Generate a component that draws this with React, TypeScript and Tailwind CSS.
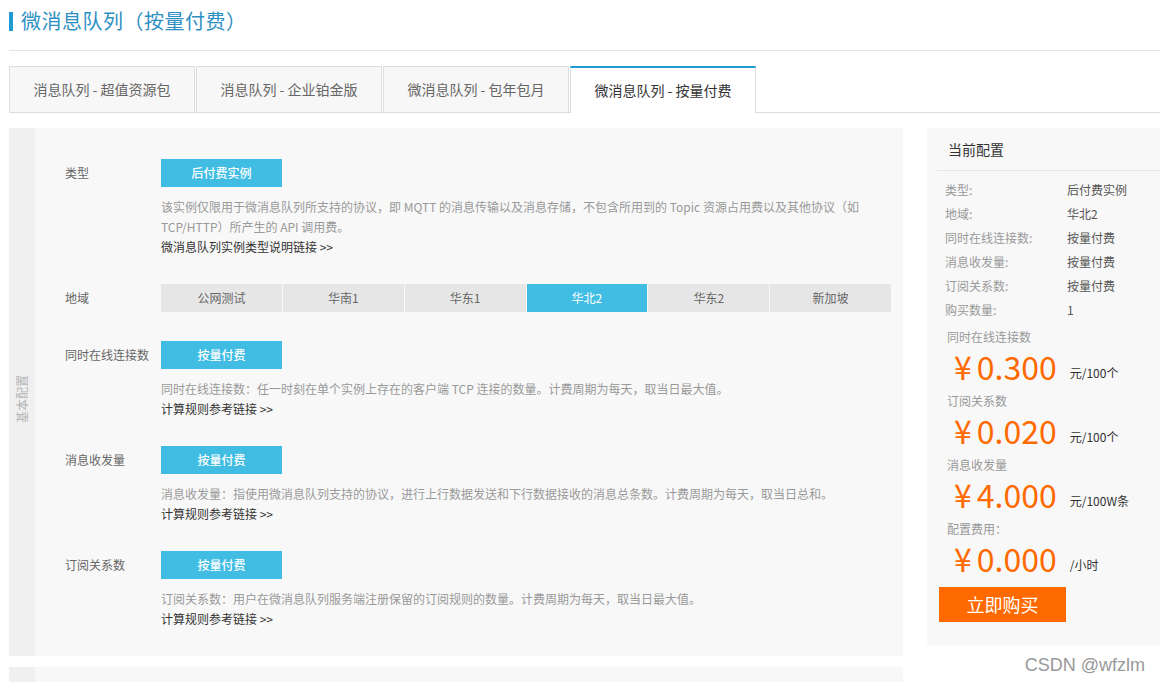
import React from "react";

const tabs = [
  "消息队列 - 超值资源包",
  "消息队列 - 企业铂金版",
  "微消息队列 - 包年包月",
  "微消息队列 - 按量付费",
];

const regions = ["公网测试", "华南1", "华东1", "华北2", "华东2", "新加坡"];

function Row({
  label,
  children,
  className = "",
}: {
  label: string;
  children: React.ReactNode;
  className?: string;
}) {
  return (
    <div className={"flex " + className}>
      <div className="w-[96px] h-[28px] flex items-center text-[#666] shrink-0">{label}</div>
      <div className="flex-1">{children}</div>
    </div>
  );
}

function BlueBtn({ children }: { children: React.ReactNode }) {
  return (
    <div className="w-[121px] h-[28px] bg-[#41bde3] text-white flex items-center justify-center text-[12px] font-medium">
      {children}
    </div>
  );
}

function Price({
  label,
  value,
  unit,
}: {
  label: string;
  value: string;
  unit: string;
}) {
  return (
    <div>
      <div className="h-[20px] flex items-center pl-[20px] text-[#999] text-[12px]">{label}</div>
      <div className="h-[44px] flex items-center pl-[27px] pb-[7px]">
        <span className="text-[#ff6a00] text-[32px] leading-none">¥</span>
        <span className="text-[#ff6a00] text-[32px] leading-none ml-[5px]">{value}</span>
        <span className="ml-[13px] mt-[14px] text-[12px] text-[#333]">{unit}</span>
      </div>
    </div>
  );
}

export default function App() {
  return (
    <div className="relative h-[682px] overflow-hidden bg-white font-['Noto_Sans_CJK_SC',sans-serif] text-[12px] text-[#666]">
      <div className="pl-[9px]">
        {/* Title */}
        <div className="h-[51px] pt-[11px] border-b border-[#e5e5e5]">
          <div className="flex items-center h-[20px] gap-[8px]">
            <div className="w-[4px] h-[19px] bg-[#1f9bd1]" />
            <div className="text-[20px] leading-[20px] text-[#2e8fc3] tracking-[0.5px]">微消息队列（按量付费）</div>
          </div>
        </div>

        {/* Tabs */}
        <div className="mt-[15px] flex border-b border-[#dddddd] h-[47px]">
          {tabs.map((t, i) => {
            const active = i === 3;
            return (
              <div
                key={t}
                className={
                  active
                    ? "w-[186px] h-[47px] ml-px bg-white border-t-2 border-t-[#1f9bd1] border-l border-r border-[#dddddd] flex items-center justify-center text-[14px] text-[#333]"
                    : i === 0
                    ? "w-[186px] h-[46px] bg-[#f7f7f7] border-t border-l border-r border-[#dddddd] flex items-center justify-center text-[14px] text-[#666]"
                    : "w-[186px] h-[46px] ml-px bg-[#f7f7f7] border-t border-l border-r border-[#dddddd] flex items-center justify-center text-[14px] text-[#666]"
                }
              >
                {t}
              </div>
            );
          })}
        </div>

        {/* Main */}
        <div className="mt-[15px] flex items-start">
          <div className="w-[894px] shrink-0">
            <div className="flex">
              <div className="w-[26px] bg-[#f0f0f0] flex items-center justify-center shrink-0 pt-[14px]">
                <span className="-rotate-90 whitespace-nowrap text-[12px] text-[#b5b5b5]">基本配置</span>
              </div>
              <div className="flex-1 bg-[#f8f8f8] pt-[31px] pb-[27px] pl-[30px] pr-[12px]">
                <Row label="类型">
                  <BlueBtn>后付费实例</BlueBtn>
                  <div className="mt-[10px] leading-[20px] text-[#999]">
                    该实例仅限用于微消息队列所支持的协议，即 MQTT 的消息传输以及消息存储，不包含所用到的 Topic 资源占用费以及其他协议（如
                    <br />
                    TCP/HTTP）所产生的 API 调用费。
                  </div>
                  <div className="leading-[20px] text-[#333]">微消息队列实例类型说明链接 &gt;&gt;</div>
                </Row>

                <Row label="地域" className="mt-[27px]">
                  <div className="grid grid-cols-6 gap-px">
                    {regions.map((r) => (
                      <div
                        key={r}
                        className={
                          r === "华北2"
                            ? "h-[28px] flex items-center justify-center bg-[#41bde3] text-white"
                            : "h-[28px] flex items-center justify-center bg-[#e6e6e6] text-[#666]"
                        }
                      >
                        {r}
                      </div>
                    ))}
                  </div>
                </Row>

                <Row label="同时在线连接数" className="mt-[29px]">
                  <BlueBtn>按量付费</BlueBtn>
                  <div className="mt-[10px] leading-[20px] text-[#999]">
                    同时在线连接数：任一时刻在单个实例上存在的客户端 TCP 连接的数量。计费周期为每天，取当日最大值。
                  </div>
                  <div className="leading-[20px] text-[#333]">计算规则参考链接 &gt;&gt;</div>
                </Row>

                <Row label="消息收发量" className="mt-[27px]">
                  <BlueBtn>按量付费</BlueBtn>
                  <div className="mt-[10px] leading-[20px] text-[#999]">
                    消息收发量：指使用微消息队列支持的协议，进行上行数据发送和下行数据接收的消息总条数。计费周期为每天，取当日总和。
                  </div>
                  <div className="leading-[20px] text-[#333]">计算规则参考链接 &gt;&gt;</div>
                </Row>

                <Row label="订阅关系数" className="mt-[27px]">
                  <BlueBtn>按量付费</BlueBtn>
                  <div className="mt-[10px] leading-[20px] text-[#999]">
                    订阅关系数：用户在微消息队列服务端注册保留的订阅规则的数量。计费周期为每天，取当日最大值。
                  </div>
                  <div className="leading-[20px] text-[#333]">计算规则参考链接 &gt;&gt;</div>
                </Row>
              </div>
            </div>

            <div className="mt-[11px] flex h-[40px]">
              <div className="w-[26px] bg-[#f0f0f0] shrink-0" />
              <div className="flex-1 bg-[#f8f8f8]" />
            </div>
          </div>

          {/* Right panel */}
          <div className="ml-[24px] flex-1 bg-[#f8f8f8] pb-[23px]">
            <div className="h-[42px] flex items-center pl-[21px] text-[14px] text-[#333]">当前配置</div>
            <div className="ml-[10px] h-px bg-[#e5e5e5]" />
            <div className="pt-[7px] pl-[18px]">
              {[
                ["类型:", "后付费实例"],
                ["地域:", "华北2"],
                ["同时在线连接数:", "按量付费"],
                ["消息收发量:", "按量付费"],
                ["订阅关系数:", "按量付费"],
                ["购买数量:", "1"],
              ].map(([k, v]) => (
                <div key={k} className="h-[24px] flex items-center">
                  <div className="w-[122px] text-[#999]">{k}</div>
                  <div className="text-[#555]">{v}</div>
                </div>
              ))}
            </div>
            <div className="mt-[5px]">
              <Price label="同时在线连接数" value="0.300" unit="元/100个" />
              <Price label="订阅关系数" value="0.020" unit="元/100个" />
              <Price label="消息收发量" value="4.000" unit="元/100W条" />
              <Price label="配置费用：" value="0.000" unit="/小时" />
            </div>
            <div className="mt-[4px] ml-[12px] w-[127px] h-[35px] bg-[#ff6a00] text-white text-[18px] flex items-center justify-center">
              立即购买
            </div>
          </div>
        </div>
      </div>

      <div className="absolute right-[15px] top-[654px] font-['Liberation_Sans',sans-serif] text-[18px] leading-[22px] text-[#999]">
        CSDN @wfzlm
      </div>
    </div>
  );
}
